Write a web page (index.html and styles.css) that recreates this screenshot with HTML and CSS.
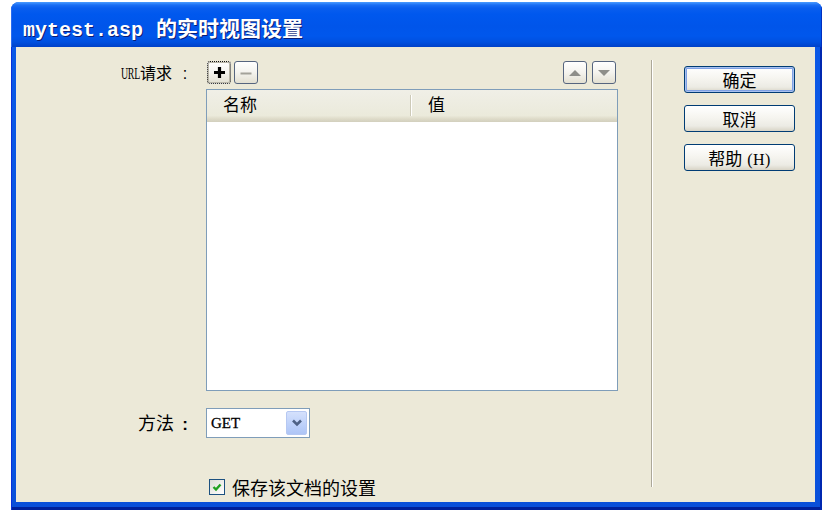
FILE: index.html
```html
<!DOCTYPE html>
<html lang="zh-CN">
<head>
<meta charset="utf-8">
<title>mytest.asp 的实时视图设置</title>
<link rel="stylesheet" href="styles.css">
</head>
<body>
<div class="window">
  <div class="titlebar">
    <span class="title"><span class="mono">mytest.asp</span><span class="title-cjk">的实时视图设置</span></span>
  </div>
  <div class="frame">
    <div class="client">
      <div class="main">
        <div class="row row-tool">
          <div class="label"><span class="lat">URL</span>请求<span class="colon">:</span></div>
          <div class="toolbar">
            <button class="tb tb-focus" type="button" aria-label="添加">
              <svg width="13" height="13" viewBox="0 0 13 13"><path d="M6.5 1v11M1 6.5h11" stroke="#000" stroke-width="3.2" fill="none"/></svg>
            </button>
            <button class="tb" type="button" aria-label="删除">
              <svg width="14" height="12" viewBox="0 0 14 12"><path d="M1.5 6.5h11" stroke="#a3a29a" stroke-width="2.2" fill="none"/></svg>
            </button>
            <button class="tb tb-up" type="button" aria-label="上移">
              <svg width="14" height="10" viewBox="0 0 14 10"><polygon points="1,8 7,2 13,8" fill="#8e8e8a"/></svg>
            </button>
            <button class="tb" type="button" aria-label="下移">
              <svg width="14" height="10" viewBox="0 0 14 10"><polygon points="1,2 13,2 7,8" fill="#8e8e8a"/></svg>
            </button>
          </div>
        </div>
        <div class="row row-list">
          <div></div>
          <div class="list">
            <div class="list-head">
              <div class="col col-name">名称</div>
              <div class="col col-value">值</div>
            </div>
            <div class="list-body"></div>
          </div>
        </div>
        <div class="row row-method">
          <div class="label label-big">方法<span class="colon colon-big">:</span></div>
          <div class="select">
            <span class="select-text">GET</span>
            <span class="select-btn">
              <svg width="12" height="10" viewBox="0 0 12 10"><polyline points="2,2.5 6,6.5 10,2.5" stroke="#4d6185" stroke-width="2.6" fill="none"/></svg>
            </span>
          </div>
        </div>
        <div class="row row-check">
          <div></div>
          <label class="check">
            <span class="check-box">
              <svg width="12" height="12" viewBox="0 0 12 12"><polyline points="2.5,6 5,8.5 9.5,3.5" stroke="#21a121" stroke-width="2.4" fill="none"/></svg>
            </span>
            <span class="check-text">保存该文档的设置</span>
          </label>
        </div>
      </div>
      <div class="sep"></div>
      <div class="side">
        <button class="btn btn-default" type="button">确定</button>
        <button class="btn" type="button">取消</button>
        <button class="btn" type="button">帮助<span class="hk">(H)</span></button>
      </div>
    </div>
  </div>
</div>
</body>
</html>
```
FILE: styles.css
```css
* { box-sizing: border-box; }

html, body {
  margin: 0;
  padding: 0;
  background: #ffffff;
}

body {
  font-family: "Liberation Serif", "Noto Sans CJK SC", serif;
  color: #000;
}

.window {
  margin: 2px 0 0 11px;
  width: 811px;
  height: 508px;
  border-radius: 8px 8px 0 0;
  overflow: hidden;
  display: flex;
  flex-direction: column;
  background: #0a57e4;
}

.titlebar {
  height: 45px;
  padding: 9px 0 0 12px;
  display: flex;
  align-items: center;
  background: linear-gradient(to bottom,
    #4a9cff 0px, #1a6ef4 3px, #0a5eee 6px, #0058ee 12px,
    #0055ea 24px, #0057ec 34px, #0050e0 40px, #0041c8 45px);
  box-shadow: inset 1px 0 #2a6cf0, inset -1px 0 #0030c0;
}

.title {
  color: #fff;
  font-weight: 700;
  line-height: 24px;
  text-shadow: 1px 1px 0 #0a1d74;
  white-space: nowrap;
}

.mono {
  font-family: "Liberation Mono", monospace;
  font-weight: 700;
  font-size: 20px;
}

.title-cjk {
  font-family: "Noto Sans CJK SC", sans-serif;
  font-weight: 700;
  font-size: 21px;
  margin-left: 13px;
}

.frame {
  flex: 1;
  padding: 0 7px 8px 5px;
  background: linear-gradient(to bottom, #0a58e6 0, #0853e0 90%, #0a4fd8 100%);
  box-shadow: inset 1px 0 #0831d9, inset -2px 0 #0028b0, inset 0 -3px #00209a;
}

.client {
  height: 100%;
  background: #ece9d8;
  display: flex;
  align-items: flex-start;
}

.main {
  padding-top: 14px;
  display: flex;
  flex-direction: column;
}

.row {
  display: grid;
  grid-template-columns: 174px 412px;
  column-gap: 16px;
  align-items: center;
}

.label {
  text-align: right;
  font-family: "Noto Sans CJK SC", sans-serif;
  font-size: 16px;
  line-height: 20px;
  white-space: nowrap;
}

.label-big {
  font-size: 18px;
}

.lat {
  display: inline-block;
  width: 19px;
  font-family: "Liberation Serif", serif;
  font-size: 16px;
  letter-spacing: -0.5px;
  transform: scaleX(0.62);
  transform-origin: left center;
  white-space: nowrap;
  overflow: visible;
  text-align: left;
}

.colon {
  display: inline-block;
  width: 10px;
  margin-left: 8px;
  text-align: center;
  font-family: "Liberation Sans", sans-serif;
  font-size: 16px;
}

.colon-big {
  margin-left: 6px;
  font-weight: 700;
  font-size: 17px;
}

.row-tool { height: 23px; }

.toolbar {
  display: flex;
  align-items: center;
  gap: 3px;
  padding-left: 1px;
  padding-right: 2px;
}

.tb {
  width: 24px;
  height: 23px;
  padding: 0;
  margin: 0;
  border: 1px solid #56657f;
  border-radius: 3px;
  background: linear-gradient(to bottom, #ffffff 0%, #f4f3ee 50%, #e3e0d2 100%);
  display: flex;
  align-items: center;
  justify-content: center;
}

.tb-focus {
  border: 1px dotted #111;
  box-shadow: inset 0 0 0 1px #b9b6a8;
}

.tb-up {
  margin-left: auto;
  margin-right: 2px;
}

.row-list {
  margin-top: 5px;
  height: 302px;
  align-items: stretch;
}

.list {
  border: 1px solid #7f9db9;
  background: #ffffff;
  display: flex;
  flex-direction: column;
}

.list-head {
  height: 32px;
  display: flex;
  background: linear-gradient(to bottom, #f0efe7 0%, #ebeadb 80%, #dedbc9 90%, #d2cfbd 100%);
  font-family: "Noto Sans CJK SC", sans-serif;
  font-size: 17px;
  line-height: 28px;
}

.col {
  padding-left: 16px;
}

.col-name {
  width: 204px;
  position: relative;
}

.col-name::after {
  content: "";
  position: absolute;
  right: 0;
  top: 5px;
  height: 21px;
  width: 1px;
  background: #cdcab8;
  box-shadow: 1px 0 #ffffff;
}

.col-value {
  flex: 1;
  padding-left: 17px;
}

.list-body { flex: 1; }

.row-method {
  margin-top: 17px;
  height: 30px;
}

.select {
  width: 104px;
  height: 30px;
  border: 1px solid #7f9db9;
  background: #fff;
  display: flex;
  align-items: center;
}

.select-text {
  flex: 1;
  padding-left: 4px;
  font-family: "Liberation Serif", serif;
  font-size: 15px;
  font-weight: 400;
  -webkit-text-stroke: 0.3px #000;
}

.select-btn {
  width: 21px;
  height: 24px;
  margin-right: 2px;
  border-radius: 2px;
  background: linear-gradient(to bottom, #d5e1fc 0%, #bcd0fa 60%, #aec5f6 100%);
  border: 1px solid #b6c8f2;
  display: flex;
  align-items: center;
  justify-content: center;
}

.row-check {
  margin-top: 39px;
  height: 18px;
}

.check {
  display: flex;
  align-items: center;
  padding-left: 3px;
}

.check-box {
  width: 16px;
  height: 16px;
  border: 1px solid #1c5180;
  background: linear-gradient(135deg, #dcdcd6 0%, #f2f2ee 60%, #ffffff 100%);
  display: flex;
  align-items: center;
  justify-content: center;
}

.check-text {
  margin-left: 7px;
  font-family: "Noto Sans CJK SC", sans-serif;
  font-size: 18px;
  line-height: 20px;
}

.sep {
  margin-left: 33px;
  margin-top: 13px;
  width: 2px;
  height: 427px;
  border-left: 1px solid #aca899;
  border-right: 1px solid #ffffff;
}

.side {
  margin-left: 31px;
  padding-top: 19px;
  display: flex;
  flex-direction: column;
  gap: 12px;
}

.btn {
  width: 111px;
  height: 27px;
  padding: 0;
  margin: 0;
  border: 1px solid #003c74;
  border-radius: 3px;
  background: linear-gradient(to bottom, #ffffff 0%, #f6f5f0 45%, #ecebe4 80%, #d8d4c6 100%);
  font-family: "Noto Sans CJK SC", sans-serif;
  font-size: 17px;
  line-height: 25px;
  color: #000;
}

.hk {
  margin-left: 5px;
  font-family: "Liberation Serif", serif;
  font-size: 16px;
  letter-spacing: 0.5px;
}

.btn-default {
  box-shadow: inset 0 0 0 1px #a9c1ef, inset 0 0 0 2px #7fa1e4;
}
```
